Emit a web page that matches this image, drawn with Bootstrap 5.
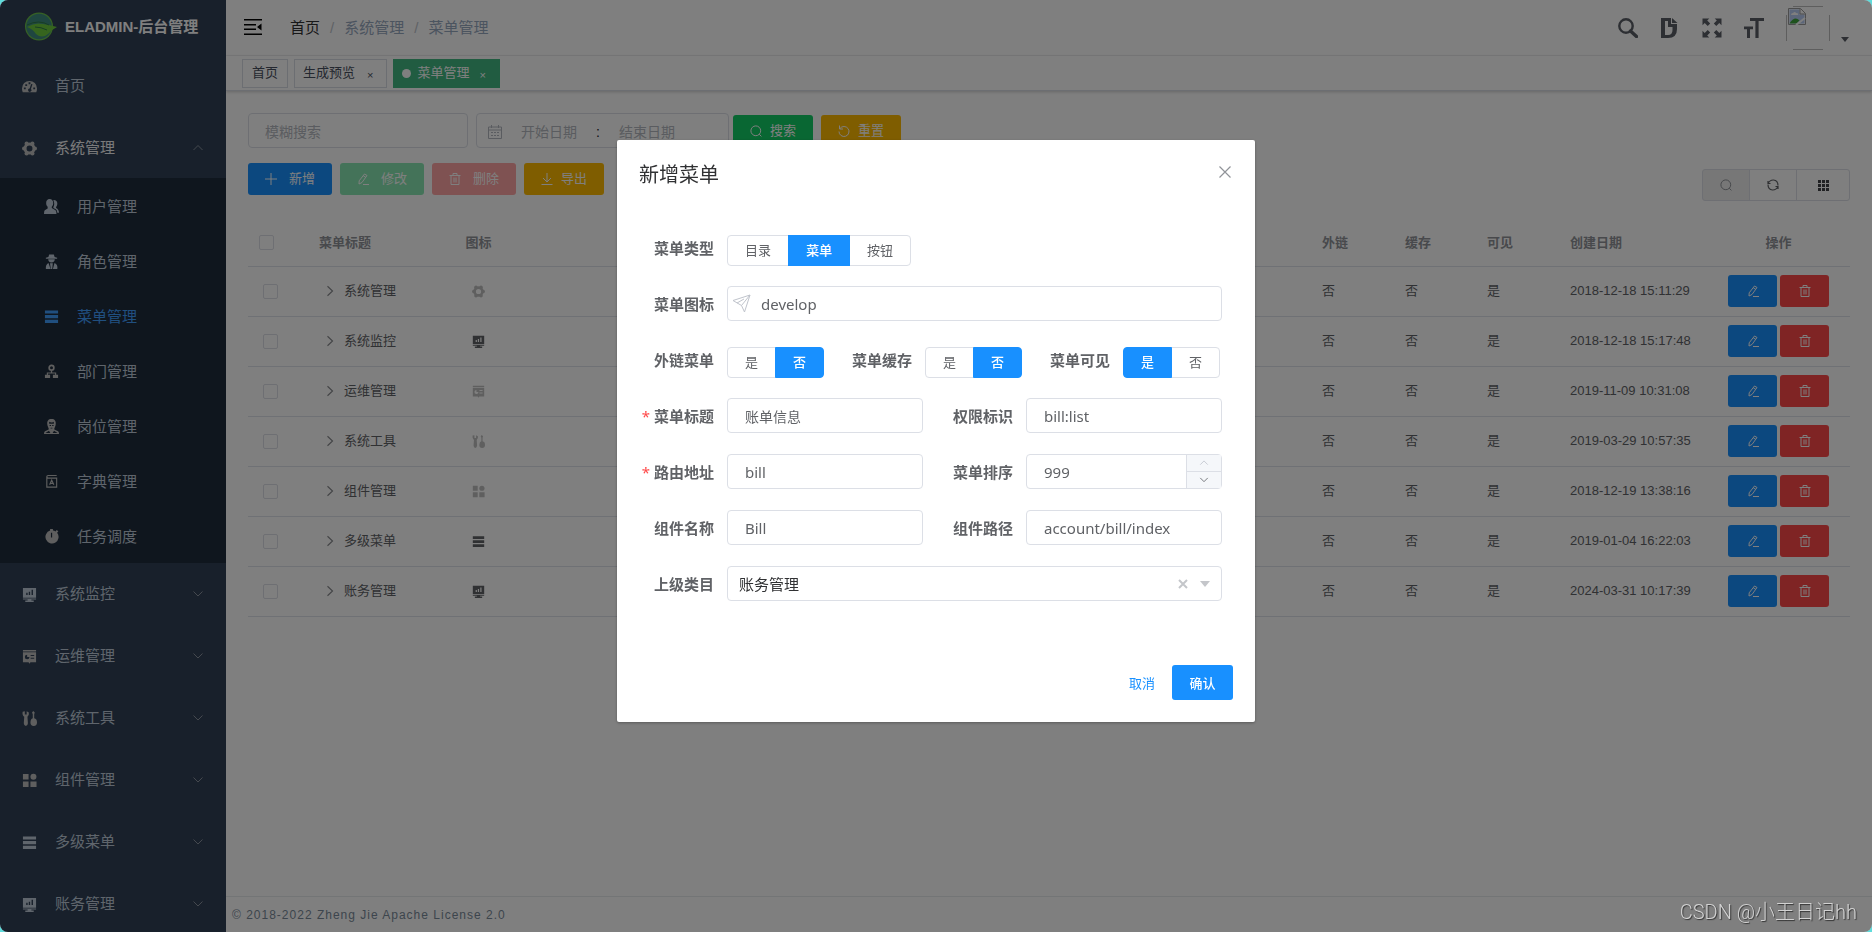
<!DOCTYPE html>
<html lang="zh-CN">
<head>
<meta charset="utf-8">
<meta name="viewport" content="width=device-width, initial-scale=1">
<title>ELADMIN-后台管理</title>
<link href="https://cdn.jsdelivr.net/npm/bootstrap@5.3.0/dist/css/bootstrap.min.css" rel="stylesheet">
<style>
  :root { --line: #dfe3ea; --edge: #dcdfe6; --txt: #606266; --blue: #1890ff; }
  body { background: #5fdcdc; font-family: "Liberation Sans", "Noto Sans CJK SC", sans-serif; font-size: 13px; line-height: 20px; color: var(--txt); }
  svg { fill: currentColor; flex: none; display: block; }
  a { text-decoration: none; color: inherit; }
  .app { border-radius: 8px; overflow: hidden; background: #fff; }
  .btn { --bs-btn-font-size: 13px; --bs-btn-line-height: 20px; --bs-btn-border-radius: 3px; }

  /* sidebar */
  .side { width: 226px; background: #304156; color: #bfcbd9; font-size: 15px; overflow: hidden; }
  .brand { height: 54px; padding-left: 25px; gap: 8px; color: #fff; font-weight: 700; }
  .menu-item { height: 62px; padding: 0 22px; gap: 18px; }
  .menu-item.high { padding-top: 2px; }
  .sub { background: #1f2d3d; }
  .sub .menu-item { height: 55px; padding: 2px 22px 0 44px; }
  .menu-item.open { color: #f4f4f5; }
  .menu-item.active { color: #409eff; }
  .arrow { color: #8b939e; }
  .soft { color: #bfbfbf; }

  /* top bar and tabs */
  .topbar { height: 56px; padding: 0 20px 0 18px; border-bottom: 1px solid #f0f1f3; color: #5a5e66; }
  .topbar .breadcrumb { --bs-breadcrumb-divider-color: #c0c4cc; --bs-breadcrumb-item-padding-x: 10px; font-size: 15px; margin-left: 28px; color: #97a8be; }
  .breadcrumb a { color: #303133; }
  .tools { gap: 22px; }
  .tags { height: 35px; padding: 0 16px; gap: 6px; border-bottom: 1px solid #d8dce5; box-shadow: 0 1px 3px rgba(0,0,0,.2); }
  .tag { height: 29px; padding: 0 8px; border: 1px solid #d8dce5; color: #495060; gap: 8px; }
  .tag.home { padding: 0 9px; }
  .tag.on { background: #42b983; border-color: #42b983; color: #fff; gap: 6px; }
  .tag i { width: 9px; height: 9px; border-radius: 50%; background: #fff; }
  .tag .shut { font-size: 11px; padding: 4px 5px 0 4px; }

  /* filters */
  .content { padding: 22px 22px 0; }
  .filters { margin-bottom: 14px; }
  .field { border: 1px solid var(--edge); border-radius: 4px; height: 35px; font-size: 14px; color: var(--txt); }
  .field::placeholder, .range input::placeholder { color: #b4b8c0; opacity: 1; }
  .query { width: 220px; padding: 2px 16px 0; }
  .range { width: 253px; padding: 2px 11px 0; }
  .range input { width: 94px; border: 0; padding: 0; text-align: center; background: none; }
  .tool { height: 32px; padding: 0 17px; gap: 8px; border: 0; color: #fff !important; display: inline-flex; align-items: center; justify-content: center; opacity: 1 !important; }
  .c-blue { background: var(--blue) !important; }
  .c-green { background: #13ce66 !important; }
  .c-amber { background: #ffba00 !important; }
  .c-red { background: #ff4949 !important; }
  .c-green-off { background: #89e7b3 !important; }
  .c-red-off { background: #ffa4a4 !important; }
  .actions { padding-top: 1px; }
  .mini { margin-top: 6px; }
  .mini .btn { height: 32px; width: 48px; padding: 0; border: 1px solid var(--edge); display: flex; align-items: center; justify-content: center; color: #606266; opacity: 1; }
  .mini .btn:disabled { background: #eee; color: #909399; }
  .mini .btn:last-child { width: 54px; color: #404246; }

  /* data table */
  .grid-table { table-layout: fixed; margin: 19px 0 0; --bs-table-color: #606266; --bs-table-bg: transparent; }
  .grid-table th { height: 46px; color: #909399; font-weight: 700; }
  .grid-table td { height: 50px; }
  .grid-table th, .grid-table td { padding: 0 11px; vertical-align: middle; border-bottom: 1px solid var(--line); }
  .grid-table td:first-child { padding-left: 15px; }
  .grid-table .form-check-input { width: 15px; height: 15px; margin: 0; border-radius: 2px; border-color: var(--edge); display: block; }
  .grid-table td svg.ic { margin: auto; color: #606266; }
  .grid-table td svg.soft { color: #bfbfbf; }
  .grid-table .name { padding-left: 16px; }
  .grid-table .name svg { color: #8a8c90; }
  .ops { gap: 3px; }
  .op { width: 49px; height: 32px; padding: 0; }
  .foot { height: 36px; border-top: 1px solid #e7eaec; padding-left: 6px; font-size: 12px; letter-spacing: 1px; color: #7a8b9a; }

  /* dialog */
  .modal-backdrop { --bs-backdrop-opacity: .5; border-radius: 8px; }
  .dlg { max-width: 638px; margin-top: 140px; }
  .dlg .modal-content { border: 0; border-radius: 2px; box-shadow: 0 1px 3px rgba(0,0,0,.3); font-family: "Noto Sans", "Noto Sans CJK SC", sans-serif; color: var(--txt); }
  .dlg .modal-header { height: 70px; padding: 0 22px; border: 0; }
  .dlg .modal-title { font-size: 20px; line-height: 28px; color: #303133; font-weight: 400; }
  .dlg .close-x { color: #909399; margin: 0 2px 6px; }
  .dlg form { padding: 20px 33px 64px 0; display: grid; gap: 21px; }
  .line { height: 35px; display: flex; align-items: center; }
  .line .cap { width: 103px; padding-right: 13px; text-align: right; font-size: 15px; font-weight: 700; flex: none; }
  .line.choices .cap { width: 101px; }
  .line .cap:first-child { width: 110px; }
  .req::before { content: "*"; color: #ff4949; margin-right: 4px; font-weight: 400; }
  .half { flex: 1 1 100px; min-width: 0; }
  .dlg .field { height: 35px; padding: 0 17px; font-size: 15px; width: 100%; background: #fff; appearance: none; display: block; }
  .dlg .field.icon-in { padding-left: 33px; }
  .dlg .field.tree { padding: 0 11px; color: #303133; }
  .dlg .field.cjk { font-size: 14px; }
  .lead-icon { left: 5px; top: 8px; color: #c0c4cc; }
  .pick { align-self: flex-end; margin-bottom: -1px; }
  .pick .btn { height: 31px; padding: 0 17px; line-height: 29px; border: 1px solid var(--edge); color: var(--txt); --bs-btn-border-radius: 4px; }
  .pick .btn-check:checked + .btn { background: var(--blue); border-color: var(--blue); color: #fff; font-weight: 500; }
  .spin { right: 1px; top: 1px; bottom: 1px; width: 35px; border-left: 1px solid var(--edge); }
  .spin button { height: 16px; border: 0; padding: 0; background: #f5f7fa; display: flex; align-items: center; justify-content: center; color: #606266; }
  .spin button:first-child { height: 17px; border-bottom: 1px solid var(--edge); color: #c0c4cc; }
  .tree-tools { right: 12px; top: 0; height: 35px; gap: 12px; color: #c4c6ca; }
  .dlg .modal-footer { border: 0; padding: 0 22px 22px; gap: 17px; }
  .dlg .modal-footer > * { margin: 0; }
  .dlg .modal-footer .btn { height: 35px; border: 0; padding: 0 17px; }
  .dlg .modal-footer .cancel { padding: 0; color: var(--blue); }
  .dlg .modal-footer .ok { color: #fff; font-weight: 500; width: 61px; }
  .bare { border: 0; background: none; padding: 0; color: inherit; }

  .signature { z-index: 1070; right: 15px; bottom: 6px; font: 20px/28px Roboto, "Noto Sans CJK SC", sans-serif; color: #d2d2d2; text-shadow: 1px 1px 1px #333; font-weight: 300; }
</style>
</head>
<body>

<svg width="0" height="0" class="position-absolute" aria-hidden="true">
  <symbol id="dash" viewBox="0 0 16 16"><path fill-rule="evenodd" d="M8 2a8 8 0 0 0-8 8q0 2 .8 4h14.400q.8-2 .8-4a8 8 0 0 0-8-8zM2 9h2v2H2zm1.500-3.500h2v2h-2zM7 3.500h2v2H7zM12 9h2v2h-2zM9.800 5.200l1.400.4-1.700 5a1.800 1.800 0 1 1-1.400-.4z"/></symbol>
  <symbol id="gear" viewBox="0 0 16 16"><circle cx="8" cy="8" r="4.800" fill="none" stroke="currentColor" stroke-width="3.200"/><circle cx="13.800" cy="8" r="2.200"/><circle cx="2.200" cy="8" r="2.200"/><circle cx="4.900" cy="2.800" r="2.200"/><circle cx="11.100" cy="2.800" r="2.200"/><circle cx="4.900" cy="13.200" r="2.200"/><circle cx="11.100" cy="13.200" r="2.200"/></symbol>
  <symbol id="users" viewBox="0 0 16 16"><path d="M6 0c2.500 0 3.800 1.800 3.800 4.200 0 1.700-.6 3.100-1.500 4v1.500l4 2.300q1 .8 1 4H0q0-3.200.8-4l3.100-2V8.200c-1-.9-1.600-2.300-1.600-4C2.300 1.800 3.600 0 6 0z"/><path d="M10 1.200c2.600-.2 4.200 1.200 4.200 3.500 0 1.700-.5 2.900-1.300 3.700v1.200q3.100 1.600 3.100 5h-1.800q-.2-3-1.600-3.600L10 9.500V8.600q1.800-3.300 0-7.400z"/></symbol>
  <symbol id="agent" viewBox="0 0 16 16"><path d="M5.500.5h5l.8 2.700 2.700.8v1H2V4l2.700-.8zM4.500 5.500h7q0 3.200-3.500 3.500-3.500-.3-3.500-3.500zM2 16q-.5-5 2.800-6.500L7 16zm6.800 0H7.300L6.400 9.800h3zM11.200 9.500Q15 11 14.200 16H9.500z"/></symbol>
  <symbol id="bars" viewBox="0 0 16 16"><path d="M1 1.500h14v3.400H1zm0 5h14v3.400H1zm0 5h14v3.300H1z"/></symbol>
  <symbol id="tree" viewBox="0 0 16 16"><circle cx="8" cy="4" r="2.500" fill="none" stroke="currentColor" stroke-width="1.800"/><path d="M7.300 7h1.400v2H13v3h-1.200v-1.800H4.200V12H3V9h4.300zM1 11.500h5.500V15H1zm8.500 0H15V15H9.500z"/></symbol>
  <symbol id="post" viewBox="0 0 16 16"><path fill-rule="evenodd" d="M8 0c3.500 0 4.800 2.200 4.500 5.500q-.2 2.500-1.500 4.500v1.200l4 1.800q1 .8 1 3H0q0-2.200 1-3l4-1.800V10Q3.700 8 3.500 5.500C3.200 2.200 4.500 0 8 0zM5.500 3v2h5V3q-2 1.500-5 0zM6 6.500v1h1.500v-1zm2.700 0v1h1.500v-1zM7 9.200v1h2v-1zM5.300 12.500 1.500 14.800h5.300zm5.400 0-1.500 2.300h5.300z"/></symbol>
  <symbol id="dict" viewBox="0 0 16 16"><path fill="none" stroke="currentColor" stroke-width="1.200" d="M13.500 1.600h-9Q3 1.600 3 3t1.500 1.400h9V14H3V3M6 11.500 8.200 6.500l2.300 5M6.800 10h3"/></symbol>
  <symbol id="timer" viewBox="0 0 16 16"><path fill-rule="evenodd" d="M6.500 0h3v1.700a7 7 0 0 1 2.800 1L13.500 1l1.800 1.400L14 4a7 7 0 1 1-7.500-2.300zM7.400 4v5h1.300V4z"/></symbol>
  <symbol id="monitor" viewBox="0 0 16 16"><path fill-rule="evenodd" d="M1 1h14v10.500H1zm3.500 5v2.500H6V6zM7.200 5v3.500h1.500V5zm3-2v5.500h1.500V3z"/><path d="M1 12.300h14v1H1zM6 13h4v1.300h2.500V16h-9v-1.700H6z"/></symbol>
  <symbol id="ops" viewBox="0 0 16 16"><path fill-rule="evenodd" d="M1 1h14v1.600H1zm0 2.400h14V14H9l-1 1.800L7 14H1zM5.500 6a2.500 2.500 0 1 0 2.500 2.600H5.500zm3.700.3v1.200H13V6.300zm0 3v1.200H13V9.300z"/></symbol>
  <symbol id="wrench" viewBox="0 0 16 16"><path d="M.7.700 3 .2v3.500h2V.2L7.300 1.500Q7.800 4.500 5.800 6l.5 7q-.3 3-2.200 3-2-.2-2.200-3L2.400 6Q0 4.500.700.700zM12 0l1.600 1.500-.6 2v4.200q3 .5 3 4.500 0 3.500-3.500 3.800Q9 15.800 9 12.200q.2-4 2.500-4.500V3.500l-.8-2z"/></symbol>
  <symbol id="blocks" viewBox="0 0 16 16"><path d="M1 1h6v6H1zm0 8h6v6H1zm8 0h6.500v6H9z"/><circle cx="12.200" cy="4" r="3.200"/></symbol>
  <symbol id="down" viewBox="0 0 12 12"><path fill="none" stroke="currentColor" d="m1.500 3.500 4.500 4.500 4.500-4.500"/></symbol>
  <symbol id="up" viewBox="0 0 12 12"><path fill="none" stroke="currentColor" d="m1.500 8 4.500-4.500L10.500 8"/></symbol>
  <symbol id="right" viewBox="0 0 12 12"><path fill="none" stroke="currentColor" stroke-width="1.200" d="m3.500 1.200 5 4.800-5 4.800"/></symbol>
  <symbol id="edit" viewBox="0 0 12 12"><path fill="none" stroke="currentColor" d="M7.500 1 10 2.500 5 9.500l-3 1.500.2-3.200zM6.300 2.800l2.500 1.600M6 11.500h6"/></symbol>
  <symbol id="bin" viewBox="0 0 12 12"><path fill="none" stroke="currentColor" d="M.5 2.500h11M4 2.500V.5h4v2M2 2.500v9h8v-9M5 4.500v5M7 4.500v5"/></symbol>
  <symbol id="find" viewBox="0 0 12 12"><circle cx="5.800" cy="5.800" r="4.900" fill="none" stroke="currentColor"/><path fill="none" stroke="currentColor" d="m9.200 9.200 2.200 2.200"/></symbol>
  <symbol id="cross" viewBox="0 0 12 12"><path fill="none" stroke="currentColor" stroke-width="1.200" d="m.5.5 11 11m0-11-11 11"/></symbol>
</svg>

<div class="app d-flex vh-100">
  <nav class="side flex-shrink-0">
    <a href="#" class="brand d-flex align-items-center">
      <svg width="32" height="30" viewBox="0 0 32 30"><circle cx="14" cy="14.500" r="14" fill="#6cc24a"/><circle cx="14" cy="14.500" r="12.800" fill="#3f8d80"/><path fill="#6ccb3c" d="M2 15Q10 10 18 12q7 1 14 3-6 3-9 7-6 5-12 0-3-5-9-7z"/><path fill="none" stroke="#2e7d4a" d="M10 15q6 0 12 3M2 13q12-6 22 0"/></svg>
      <span>ELADMIN-后台管理</span>
    </a>
    <a href="#" class="menu-item high d-flex align-items-center"><svg class="soft" width="15" height="15"><use href="#dash"/></svg>首页</a>
    <a href="#" class="menu-item high open d-flex align-items-center"><svg class="soft" width="15" height="15"><use href="#gear"/></svg>系统管理<svg class="arrow ms-auto" width="12" height="12"><use href="#up"/></svg></a>
    <div class="sub">
      <a href="#" class="menu-item d-flex align-items-center"><svg width="15" height="15"><use href="#users"/></svg>用户管理</a>
      <a href="#" class="menu-item d-flex align-items-center"><svg width="15" height="15"><use href="#agent"/></svg>角色管理</a>
      <a href="#" class="menu-item active d-flex align-items-center"><svg width="15" height="15"><use href="#bars"/></svg>菜单管理</a>
      <a href="#" class="menu-item d-flex align-items-center"><svg class="soft" width="15" height="15"><use href="#tree"/></svg>部门管理</a>
      <a href="#" class="menu-item d-flex align-items-center"><svg class="soft" width="15" height="15"><use href="#post"/></svg>岗位管理</a>
      <a href="#" class="menu-item d-flex align-items-center"><svg class="soft" width="15" height="15"><use href="#dict"/></svg>字典管理</a>
      <a href="#" class="menu-item d-flex align-items-center"><svg class="soft" width="15" height="15"><use href="#timer"/></svg>任务调度</a>
    </div>
    <a href="#" class="menu-item d-flex align-items-center"><svg width="15" height="15"><use href="#monitor"/></svg>系统监控<svg class="arrow ms-auto" width="12" height="12"><use href="#down"/></svg></a>
    <a href="#" class="menu-item d-flex align-items-center"><svg class="soft" width="15" height="15"><use href="#ops"/></svg>运维管理<svg class="arrow ms-auto" width="12" height="12"><use href="#down"/></svg></a>
    <a href="#" class="menu-item d-flex align-items-center"><svg class="soft" width="15" height="15"><use href="#wrench"/></svg>系统工具<svg class="arrow ms-auto" width="12" height="12"><use href="#down"/></svg></a>
    <a href="#" class="menu-item d-flex align-items-center"><svg class="soft" width="15" height="15"><use href="#blocks"/></svg>组件管理<svg class="arrow ms-auto" width="12" height="12"><use href="#down"/></svg></a>
    <a href="#" class="menu-item d-flex align-items-center"><svg width="15" height="15"><use href="#bars"/></svg>多级菜单<svg class="arrow ms-auto" width="12" height="12"><use href="#down"/></svg></a>
    <a href="#" class="menu-item d-flex align-items-center"><svg width="15" height="15"><use href="#monitor"/></svg>账务管理<svg class="arrow ms-auto" width="12" height="12"><use href="#down"/></svg></a>
  </nav>

  <div class="d-flex flex-column flex-grow-1 overflow-hidden">
    <header class="topbar d-flex align-items-center">
      <button class="bare text-black" aria-label="收起菜单"><svg width="18" height="18" viewBox="0 0 18 18"><path d="M0 0h18v1.500H0zm0 5h12v1.500H0zm0 4.500h12V11H0zm0 5h18V16H0zM17.500 4.500v7L13 8z"/></svg></button>
      <nav aria-label="breadcrumb"><ol class="breadcrumb mb-0">
        <li class="breadcrumb-item"><a href="#">首页</a></li>
        <li class="breadcrumb-item">系统管理</li>
        <li class="breadcrumb-item">菜单管理</li>
      </ol></nav>
      <div class="tools d-flex align-items-center ms-auto">
        <button class="bare" aria-label="查找"><svg width="20" height="20" viewBox="0 0 20 20"><circle cx="8" cy="8" r="6.700" fill="none" stroke="currentColor" stroke-width="2.400"/><path d="m12.500 13 6 5.500" stroke="currentColor" stroke-width="3.400" stroke-linecap="round"/></svg></button>
        <button class="bare" aria-label="文档"><svg width="20" height="20" viewBox="0 0 20 20"><path fill-rule="evenodd" d="M1 0h10v6h6v5q0 9-9 9H1zm4 3v14h3q4.500 0 4.500-5V9H8V3z"/><path d="M12 0 17.500 5H12z"/></svg></button>
        <button class="bare" aria-label="全屏"><svg width="20" height="20" viewBox="0 0 20 20"><path d="M.5.500h6.800L5.200 2.600l3 3-2.500 2.500-3-3L.5 7.300zm19 0v6.800l-2.200-2.200-3 3-2.500-2.500 3-3L12.700.500zM.5 19.500v-6.800l2.200 2.200 3-3 2.500 2.500-3 3 2.100 2.100zm19 0h-6.800l2.100-2.100-3-3 2.500-2.500 3 3 2.200-2.200z"/></svg></button>
        <button class="bare" aria-label="布局大小"><svg width="20" height="20" viewBox="0 0 20 20"><path d="M6 0h14v3h-5.400v17h-3.200V3H6zM0 8.500h9v2.700H6V20H3v-8.800H0z"/></svg></button>
        <button class="bare d-flex align-items-end" aria-label="用户">
          <svg width="44" height="44" viewBox="0 0 44 44"><path fill="none" stroke="#bdbdbd" d="M7 .5h30M7 43.500h30M.5 9v26M43.500 9v26"/><path fill="#fff" stroke="#9a9a9a" d="M2.500 2.500h12l5 5v11h-17z"/><path fill="#b8cdf5" d="M3.500 3.500h10v5h5v9h-15z"/><path fill="#fff" stroke="#9a9a9a" d="M14 3v5h5"/><path fill="#fff" d="M5 9q0-2 2-2 2-2 3 0 3 0 2 2z"/><path fill="#3fa53a" d="M3.500 17.500q5-8 10-3l-3 3z"/><path stroke="#fff" stroke-width="2" d="m10 19 9-7"/></svg>
          <svg class="ms-2 mb-1" width="14" height="12" viewBox="0 0 14 12"><path d="M3 3h8L7 8z"/></svg>
        </button>
      </div>
    </header>
    <div class="tags d-flex align-items-center">
      <a href="#" class="tag home d-flex align-items-center">首页</a>
      <a href="#" class="tag d-flex align-items-center">生成预览<span class="shut">×</span></a>
      <a href="#" class="tag on d-flex align-items-center"><i></i>菜单管理<span class="shut">×</span></a>
    </div>

    <main class="content flex-grow-1">
      <div class="filters d-flex align-items-center">
        <input class="field query me-2" type="text" placeholder="模糊搜索" aria-label="模糊搜索">
        <div class="field range d-flex align-items-center me-1">
          <svg width="14" height="14" viewBox="0 0 14 14" style="color:#b4b8c0"><path fill="none" stroke="currentColor" d="M.5 2h13v11.500H.5zM.5 5h13M3.500 0v3M10.500 0v3M3 7.500h2m1 0h2m1 0h2M3 10.500h2m1 0h2m1 0h2"/></svg>
          <input type="text" placeholder="开始日期" aria-label="开始日期"><span class="text-dark">:</span><input type="text" placeholder="结束日期" aria-label="结束日期">
        </div>
        <button class="btn tool c-green me-2"><svg width="12" height="12"><use href="#find"/></svg>搜索</button>
        <button class="btn tool c-amber"><svg width="12" height="12" viewBox="0 0 12 12"><path fill="none" stroke="currentColor" d="M2 3.500a5 5 0 1 1-1 3M1.500.5v3.500H5"/></svg>重置</button>
      </div>
      <div class="actions d-flex align-items-start gap-2">
        <button class="btn tool c-blue"><svg class="me-1" width="12" height="12" viewBox="0 0 12 12"><path stroke="currentColor" d="M0 6h12M6 0v12"/></svg>新增</button>
        <button class="btn tool c-green-off" disabled><svg class="me-1" width="12" height="12"><use href="#edit"/></svg>修改</button>
        <button class="btn tool c-red-off" disabled><svg class="me-1" width="12" height="12"><use href="#bin"/></svg>删除</button>
        <button class="btn tool c-amber"><svg width="12" height="12" viewBox="0 0 12 12"><path fill="none" stroke="currentColor" d="M6 0v9M2 5l4 4 4-4M.5 11.500h11"/></svg>导出</button>
        <div class="btn-group mini ms-auto">
          <button class="btn" disabled aria-label="搜索"><svg width="12" height="12"><use href="#find"/></svg></button>
          <button class="btn" aria-label="刷新"><svg width="12" height="12" viewBox="0 0 12 12"><path fill="none" stroke="currentColor" stroke-width="1.200" d="M1 4.500Q3 .8 6.500 1 11 1.500 11 6.500M11 7.500Q9 11.200 5.500 11 1 10.500 1 5.500M1 2v2.500h2.500M11 10V7.500H8.500"/></svg></button>
          <button class="btn" aria-label="列设置"><svg width="11" height="11" viewBox="0 0 11 11"><path d="M0 0h3v3H0zm4 0h3v3H4zm4 0h3v3H8zM0 4h3v3H0zm4 0h3v3H4zm4 0h3v3H8zM0 8h3v3H0zm4 0h3v3H4zm4 0h3v3H8z"/></svg></button>
        </div>
      </div>

      <table class="table grid-table">
        <colgroup><col style="width:60px"><col style="width:129px"><col style="width:83px"><col><col style="width:83px"><col style="width:82px"><col style="width:83px"><col style="width:148px"><col style="width:143px"></colgroup>
        <thead><tr><th><input class="form-check-input" type="checkbox" aria-label="全选"></th><th>菜单标题</th><th class="text-center">图标</th><th></th><th>外链</th><th>缓存</th><th>可见</th><th>创建日期</th><th class="text-center">操作</th></tr></thead>
        <tbody id="rows"></tbody>
      </table>
    </main>
    <footer class="foot d-flex align-items-center">© 2018-2022 Zheng Jie Apache License 2.0</footer>
  </div>
</div>

<div class="modal-backdrop show"></div>
<div class="modal show d-block" role="dialog" aria-labelledby="dlgTitle">
  <div class="modal-dialog dlg">
    <div class="modal-content">
      <div class="modal-header justify-content-between">
        <h1 class="modal-title" id="dlgTitle">新增菜单</h1>
        <button class="bare close-x" aria-label="关闭"><svg width="12" height="12"><use href="#cross"/></svg></button>
      </div>
      <form>
        <div class="line">
          <span class="cap" id="l1">菜单类型</span>
          <div class="btn-group pick" role="group" aria-labelledby="l1">
            <input class="btn-check" type="radio" name="type" id="t1"><label class="btn" for="t1">目录</label>
            <input class="btn-check" type="radio" name="type" id="t2" checked><label class="btn" for="t2">菜单</label>
            <input class="btn-check" type="radio" name="type" id="t3"><label class="btn" for="t3">按钮</label>
          </div>
        </div>
        <div class="line">
          <label class="cap" for="icon">菜单图标</label>
          <div class="position-relative flex-fill">
            <svg class="lead-icon position-absolute" width="19" height="19" viewBox="0 0 19 19"><path fill="none" stroke="currentColor" d="M1 6.500 18 1l-5.500 17-3-6.500zM9.500 11.500 18 1M5 9l7-4"/></svg>
            <input class="field icon-in" id="icon" type="text" value="develop">
          </div>
        </div>
        <div class="line choices">
          <span class="cap" id="l2">外链菜单</span>
          <div class="btn-group pick" role="group" aria-labelledby="l2">
            <input class="btn-check" type="radio" name="frame" id="f1"><label class="btn" for="f1">是</label>
            <input class="btn-check" type="radio" name="frame" id="f2" checked><label class="btn" for="f2">否</label>
          </div>
          <span class="cap" id="l3">菜单缓存</span>
          <div class="btn-group pick" role="group" aria-labelledby="l3">
            <input class="btn-check" type="radio" name="cache" id="c1"><label class="btn" for="c1">是</label>
            <input class="btn-check" type="radio" name="cache" id="c2" checked><label class="btn" for="c2">否</label>
          </div>
          <span class="cap" id="l4">菜单可见</span>
          <div class="btn-group pick" role="group" aria-labelledby="l4">
            <input class="btn-check" type="radio" name="show" id="s1" checked><label class="btn" for="s1">是</label>
            <input class="btn-check" type="radio" name="show" id="s2"><label class="btn" for="s2">否</label>
          </div>
        </div>
        <div class="line">
          <label class="cap req" for="title">菜单标题</label><div class="half"><input class="field cjk" id="title" type="text" value="账单信息"></div>
          <label class="cap" for="perm">权限标识</label><div class="half"><input class="field" id="perm" type="text" value="bill:list"></div>
        </div>
        <div class="line">
          <label class="cap req" for="path">路由地址</label><div class="half"><input class="field" id="path" type="text" value="bill"></div>
          <label class="cap" for="sort">菜单排序</label>
          <div class="half position-relative">
            <input class="field" id="sort" type="text" inputmode="numeric" value="999">
            <div class="spin position-absolute d-flex flex-column"><button type="button" aria-label="增加"><svg width="10" height="10"><use href="#up"/></svg></button><button type="button" aria-label="减少"><svg width="10" height="10"><use href="#down"/></svg></button></div>
          </div>
        </div>
        <div class="line">
          <label class="cap" for="cname">组件名称</label><div class="half"><input class="field" id="cname" type="text" value="Bill"></div>
          <label class="cap" for="cpath">组件路径</label><div class="half"><input class="field" id="cpath" type="text" value="account/bill/index"></div>
        </div>
        <div class="line">
          <label class="cap" for="pid">上级类目</label>
          <div class="position-relative flex-fill">
            <select class="field tree" id="pid"><option>账务管理</option></select>
            <div class="tree-tools position-absolute d-flex align-items-center">
              <button type="button" class="bare" aria-label="清除"><svg width="10" height="10" viewBox="0 0 10 10"><path stroke="currentColor" stroke-width="2" d="m1 1 8 8m0-8L1 9"/></svg></button>
              <svg width="10" height="10" viewBox="0 0 10 10"><path d="M0 2h10L5 8z"/></svg>
            </div>
          </div>
        </div>
      </form>
      <div class="modal-footer">
        <button type="button" class="btn cancel">取消</button>
        <button type="button" class="btn ok c-blue">确认</button>
      </div>
    </div>
  </div>
</div>
<div class="signature position-fixed">CSDN @小王日记hh</div>

<script src="https://cdn.jsdelivr.net/npm/bootstrap@5.3.0/dist/js/bootstrap.bundle.min.js"></script>
<script>
  const menus = [
    ['系统管理', 'gear', 'soft', '2018-12-18 15:11:29'],
    ['系统监控', 'monitor', '', '2018-12-18 15:17:48'],
    ['运维管理', 'ops', 'soft', '2019-11-09 10:31:08'],
    ['系统工具', 'wrench', 'soft', '2019-03-29 10:57:35'],
    ['组件管理', 'blocks', 'soft', '2018-12-19 13:38:16'],
    ['多级菜单', 'bars', '', '2019-01-04 16:22:03'],
    ['账务管理', 'monitor', '', '2024-03-31 10:17:39']
  ];
  const icon = (id, size, cls = '') => `<svg class="${cls}" width="${size}" height="${size}"><use href="#${id}"/></svg>`;
  document.getElementById('rows').innerHTML = menus.map(([name, glyph, tone, date]) => `
    <tr>
      <td><input class="form-check-input" type="checkbox" aria-label="选择${name}"></td>
      <td class="name"><div class="d-flex align-items-center gap-2">${icon('right', 12)}${name}</div></td>
      <td>${icon(glyph, 13, 'ic ' + tone)}</td><td></td>
      <td>否</td><td>否</td><td>是</td><td>${date}</td>
      <td><div class="ops d-flex justify-content-center">
        <button class="btn tool op c-blue" aria-label="编辑">${icon('edit', 12)}</button>
        <button class="btn tool op c-red" aria-label="删除">${icon('bin', 12)}</button>
      </div></td>
    </tr>`).join('');
</script>
</body>
</html>
